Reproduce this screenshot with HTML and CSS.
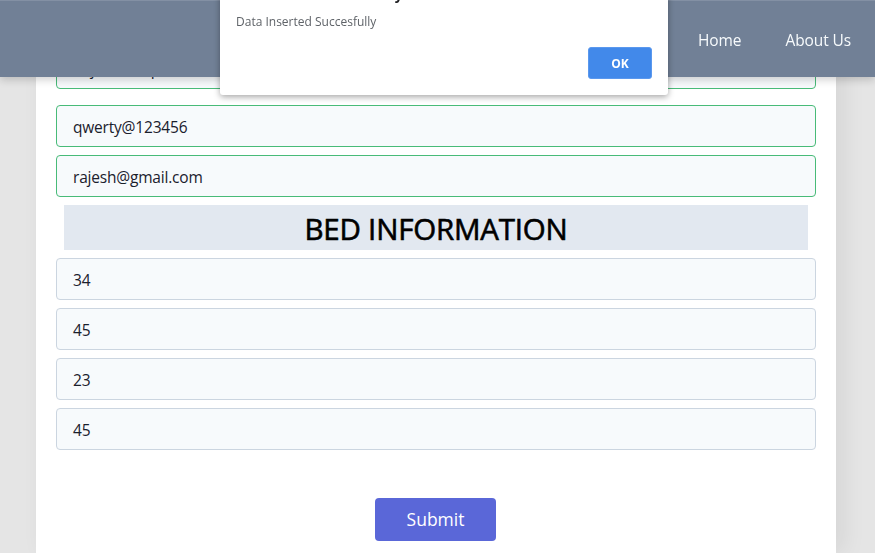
FILE: index.html
```html
<!DOCTYPE html>
<html lang="en">
<head>
<meta charset="utf-8">
<title>Hospital Form</title>
<link rel="stylesheet" href="styles.css">
</head>
<body>
<header class="navbar">
  <nav class="nav-links">
    <a class="nav-link" href="#">Home</a>
    <a class="nav-link" href="#">About Us</a>
  </nav>
</header>

<main class="page">
  <form class="card">
    <div class="field-group first-group">
      <div class="field valid">Rajesh Hospital</div>
    </div>
    <div class="field-group">
      <div class="field valid">qwerty@123456</div>
      <div class="field valid">rajesh@gmail.com</div>
      <h2 class="section-title">BED INFORMATION</h2>
      <div class="field">34</div>
      <div class="field">45</div>
      <div class="field">23</div>
      <div class="field">45</div>
    </div>
    <div class="actions">
      <button type="button" class="submit">Submit</button>
    </div>
  </form>
</main>

<div class="alert" role="alertdialog">
  <div class="alert-title">localhost:3000 says</div>
  <div class="alert-message">Data Inserted Succesfully</div>
  <div class="alert-actions">
    <button type="button" class="alert-ok">OK</button>
  </div>
</div>
</body>
</html>
```

FILE: styles.css
```css
* { box-sizing: border-box; }

html, body {
  margin: 0;
  padding: 0;
  height: 100%;
  overflow: hidden;
}

body {
  background: #e5e5e5;
  font-family: "Open Sans", "Noto Sans", sans-serif;
  color: #1a202c;
}

.navbar {
  position: fixed;
  top: 0;
  left: 0;
  right: 0;
  height: 77px;
  background: #718096;
  border-top: 1px solid #8390a4;
  box-shadow: 0 3px 8px rgba(0, 0, 0, 0.18);
  display: flex;
  justify-content: flex-end;
  align-items: center;
  padding-right: 24px;
  z-index: 5;
}

.nav-links {
  display: flex;
  gap: 44px;
  padding-top: 1px;
}

.nav-link {
  color: #f7fafc;
  text-decoration: none;
  font-size: 15.5px;
  letter-spacing: -0.1px;
}

.page {
  padding-left: 36px;
  height: 100%;
}

.card {
  width: 800px;
  height: 100%;
  background: #ffffff;
  padding: 47px 20px 0;
  box-shadow: 8px 0 22px rgba(0, 0, 0, 0.07);
}

.field-group {
  display: flex;
  flex-direction: column;
  gap: 8px;
}

.first-group {
  margin-bottom: 16px;
}

.field {
  height: 42px;
  background: #f7fafc;
  border: 1px solid #cbd5e0;
  border-radius: 4px;
  padding: 1px 16px 0;
  display: flex;
  align-items: center;
  font-size: 15.5px;
  color: #1a202c;
  letter-spacing: -0.2px;
}

.field.valid {
  border-color: #48bb78;
}

.section-title {
  margin: 0 8px;
  height: 45px;
  background: #e2e8f0;
  display: flex;
  align-items: center;
  justify-content: center;
  font-size: 29.5px;
  font-weight: 400;
  -webkit-text-stroke: 0.6px #000;
  color: #000;
  letter-spacing: -0.2px;
  padding-top: 1px;
}

.actions {
  display: flex;
  justify-content: center;
  padding-top: 48px;
  padding-right: 1px;
}

.submit {
  width: 121px;
  height: 43px;
  background: #5a67d8;
  color: #ffffff;
  border: none;
  border-radius: 4px;
  font-family: inherit;
  font-size: 17.5px;
  padding-bottom: 2px;
  cursor: pointer;
}

.alert {
  position: absolute;
  left: 220px;
  top: -30px;
  width: 448px;
  height: 125px;
  background: #ffffff;
  border-radius: 0 0 3px 3px;
  box-shadow: 0 2px 6px rgba(0, 0, 0, 0.35);
  padding: 16px 16px 0;
  z-index: 10;
  font-family: "Open Sans", "Noto Sans", sans-serif;
}

.alert-title {
  font-size: 14px;
  font-weight: 700;
  color: #202124;
  line-height: 17px;
  padding-left: 40px;
}

.alert-message {
  margin-top: 11px;
  font-size: 12px;
  color: #5f6368;
  line-height: 16px;
}

.alert-actions {
  display: flex;
  justify-content: flex-end;
  margin-top: 17px;
}

.alert-ok {
  width: 64px;
  height: 32px;
  background: #4289ea;
  color: #ffffff;
  border: 1px solid #5a98ee;
  border-radius: 3px;
  font-family: inherit;
  font-size: 12px;
  font-weight: 700;
}
```
